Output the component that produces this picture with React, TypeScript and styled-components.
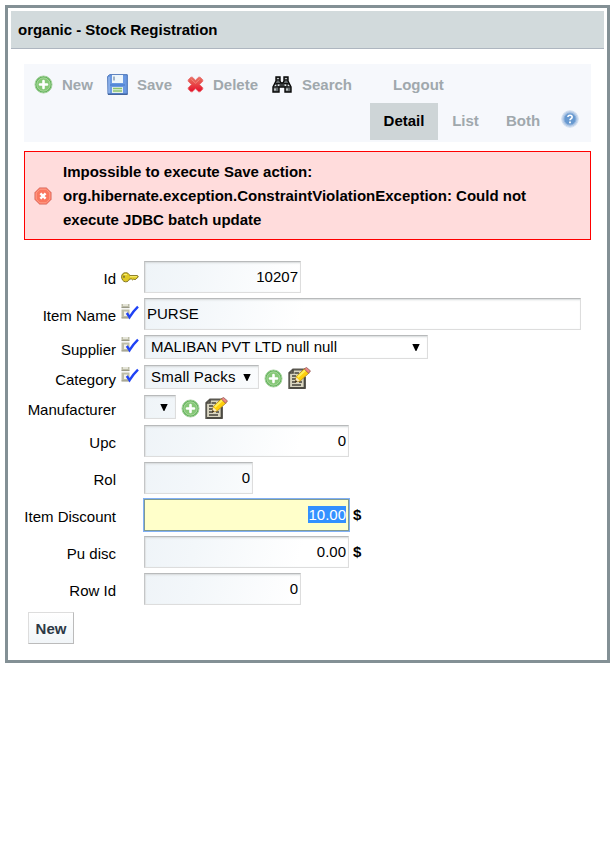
import React from "react";
import styled, { createGlobalStyle, css } from "styled-components";

const GlobalStyle = createGlobalStyle`
  * { box-sizing: border-box; }
  body { margin: 0; background: #fff; color: #000; font: 15px/24px "Liberation Sans", Arial, sans-serif; }
  svg { display: block; flex: none; }
`;

const Frame = styled.main`
  width: 605px;
  height: 658px;
  margin: 5px;
  padding: 3px;
  border: 3px solid #839095;
`;
const TitleBar = styled.h1`
  margin: 0;
  height: 38px;
  padding-left: 7px;
  border-bottom: 1px solid #aeb6c0;
  background: #d2dadc;
  font-size: 15px;
  line-height: 37px;
  letter-spacing: -0.02px;
`;
const Toolbar = styled.nav`
  width: 567px;
  height: 78px;
  margin: 15px 0 0 13px;
  background: #f6f8fc;
`;
const ActionRow = styled.div`
  display: flex;
  align-items: center;
  height: 39px;
  padding: 2px 0 0 10px;
`;
const ActionIcon = styled.span<{ $w: number }>`
  width: ${(p) => p.$w}px;
`;
const Action = styled.a<{ $w: number }>`
  width: ${(p) => p.$w}px;
  color: #a0a8ad;
  font-weight: bold;
  white-space: nowrap;
`;
const ViewRow = styled.div`
  display: flex;
  justify-content: flex-end;
  padding-right: 12px;
`;
const View = styled.a<{ $active?: boolean; $w: number }>`
  width: ${(p) => p.$w}px;
  height: 37px;
  line-height: 36px;
  text-align: center;
  font-weight: bold;
  color: ${(p) => (p.$active ? "#000" : "#a0a8ad")};
  background: ${(p) => (p.$active ? "#ced5d7" : "transparent")};
`;
const HelpSlot = styled.span`
  padding: 7px 0 0 8px;
`;
const ErrorBox = styled.div`
  display: flex;
  align-items: center;
  width: 567px;
  height: 89px;
  margin: 9px 0 0 13px;
  padding-left: 9px;
  gap: 11px;
  border: 1px solid #f00;
  background: #ffdcdc;
  font-weight: bold;
`;
const ErrorLine = styled.div`
  white-space: nowrap;
`;
const Form = styled.form`
  margin: 21px 0 0 5px;
`;
const Row = styled.div<{ $compact?: boolean }>`
  display: grid;
  grid-template-columns: 100px 28px auto;
  height: ${(p) => (p.$compact ? 30 : 37)}px;
`;
const Label = styled.label<{ $drop?: number }>`
  padding-top: ${(p) => p.$drop ?? 6}px;
  text-align: right;
  white-space: nowrap;
`;
const Marker = styled.span<{ $top: number }>`
  padding: ${(p) => p.$top}px 0 0 4.5px;
`;
const Editor = styled.div`
  display: flex;
  align-items: flex-start;
`;
const fieldBox = css`
  border: 1px solid #ddd;
  border-top-color: #b8babb;
  border-left-color: #c4c6c7;
  box-shadow: inset 0 2px 2px -1px #d5d8d9, inset 1px 0 1px #e2e4e5;
  background: linear-gradient(105deg, #eff4f8 0, #f3f7fa 50px, #fff 155px);
`;
const Field = styled.div<{ $w: number; $left?: boolean; $focus?: boolean }>`
  ${fieldBox}
  width: ${(p) => p.$w}px;
  height: 32px;
  padding: 0 2px;
  line-height: 30px;
  text-align: ${(p) => (p.$left ? "left" : "right")};
  ${(p) =>
    p.$focus &&
    css`
      border-color: #7f9a91;
      background: #ffffca;
      box-shadow: 0 0 0 1px #81b0f5;
    `}
`;
const Selected = styled.span`
  display: inline-block;
  height: 17px;
  line-height: 17px;
  background: #3390ff;
  color: #fff;
`;
const Select = styled.div<{ $w: number; $spacing?: number }>`
  ${fieldBox}
  display: flex;
  justify-content: space-between;
  align-items: center;
  width: ${(p) => p.$w}px;
  height: 24px;
  padding: 0 7px 0 6px;
  line-height: 22px;
  letter-spacing: ${(p) => p.$spacing ?? 0}px;
  white-space: nowrap;
`;
const Currency = styled.b`
  padding: 4px 0 0 4px;
`;
const RowAction = styled.span<{ $x: number; $y: number }>`
  padding: ${(p) => p.$y}px 0 0 ${(p) => p.$x}px;
`;
const NewButton = styled.button`
  display: block;
  width: 46px;
  height: 32px;
  margin: 2px 0 0 12px;
  padding: 0;
  border: 1px solid #ddd;
  border-right-color: #bbb;
  border-bottom-color: #bbb;
  background: linear-gradient(#fff, #f1f5f8);
  color: #2c3845;
  font: bold 15px "Liberation Sans", Arial, sans-serif;
`;

const AddIcon = () => (
  <svg width="19" height="19" viewBox="0 0 19 19">
    <circle cx="9.5" cy="9.5" r="8.5" fill="#5fb158" stroke="#a4d19b" />
    <circle cx="9.5" cy="9.5" r="6.7" fill="#86c877" stroke="#b5dcaa" strokeWidth=".8" />
    <path d="M9.5 6v7M6 9.5h7" stroke="#fff" strokeWidth="2.6" strokeLinecap="round" />
  </svg>
);
const SaveIcon = () => (
  <svg width="21" height="21" viewBox="0 0 21 21">
    <path d="M2.5.7h17.8v19.6H1L.7 2.5z" fill="#6b99e2" stroke="#4670b4" />
    <path d="M2 3v16.5" stroke="#a7c5f2" />
    <path d="M5 1h11v8H5z" fill="#eef6fb" />
    <path d="M7 2.5v4" stroke="#7890ab" strokeWidth="1.3" />
    <path d="M3 10h15v2H3z" fill="#5588d6" />
    <path d="M5 13h11v6H5z" fill="#e4f0e7" />
    <path d="M6 14.5h9M6 17h9" stroke="#8cc36d" strokeWidth="1.5" />
    <path d="M1 20.2h19.5" stroke="#36588f" />
  </svg>
);
const DeleteIcon = () => (
  <svg width="17" height="17" viewBox="0 0 17 17">
    <defs>
      <linearGradient id="red" x2="0" y2="1">
        <stop stopColor="#e8705f" />
        <stop offset=".45" stopColor="#e84a49" />
        <stop offset="1" stopColor="#e60d2b" />
      </linearGradient>
    </defs>
    <path d="M3.9 1.2h1.4l3.2 3 3.2-3h1.4l2.7 2.7v1.3l-3.2 3.3 3.2 3.3v1.3l-2.7 2.7h-1.4l-3.2-3-3.2 3H3.9l-2.7-2.7v-1.3l3.2-3.3-3.2-3.3V3.9z" fill="url(#red)" stroke="#e8696c" strokeWidth=".9" strokeLinejoin="round" />
    <path d="m4.3 3.2 4.2 4 4.2-4" fill="none" stroke="#f39b8f" opacity=".7" />
  </svg>
);
const SearchIcon = () => (
  <svg width="20" height="17" viewBox="0 0 20 17">
    <path d="M4 1h4v4l1 2h2l1-2V1h4v4l3 6v5h-6v-5H7v5H1v-5l3-6z" fill="#63696b" stroke="#080808" strokeWidth="1.4" />
    <path d="M4 4h4m4 0h4M3.5 7.5H8m4 0h4.5M1 11h6m6 0h6M5 8v3m10-3v3M9 6v4m2-4v4" stroke="#111" />
    <path d="M6 2v1M14 2v1M6.5 8.5V10M13.5 8.5V10M3.5 9v1M16.5 9v1M3 12.5v2m12-2v2" stroke="#e5e8e9" strokeWidth="1.4" />
  </svg>
);
const HelpIcon = () => (
  <svg width="18" height="18" viewBox="0 0 18 18">
    <circle cx="9" cy="9" r="8.3" fill="#b8cde8" stroke="#d3e0f0" />
    <circle cx="9" cy="9" r="6" fill="#6799d0" stroke="#8aafda" />
    <path d="M6.8 7Q7 5.3 9 5.3t2.2 1.5Q11.3 8 10 8.8q-1 .5-1 1.4" fill="none" stroke="#fff" strokeWidth="1.6" />
    <path d="M9 11.5v1.7" stroke="#fff" strokeWidth="1.8" />
  </svg>
);
const ErrorIcon = () => (
  <svg width="18" height="18" viewBox="0 0 18 18">
    <path d="M5.5.7h7l4.8 4.8v7l-4.8 4.8h-7L.7 12.5v-7z" fill="#f36550" stroke="#e39a94" />
    <path d="M6 2.2h6L15.8 6v6L12 15.8H6L2.2 12V6z" fill="#fa775f" stroke="#ffa18b" />
    <path d="m6.4 6.4 5.2 5.2m0-5.2-5.2 5.2" stroke="#fff" strokeWidth="2.4" />
  </svg>
);
const KeyIcon = () => (
  <svg width="18" height="11" viewBox="0 0 18 11">
    <path d="M4.5.7C2.2.7.6 2.3.6 4.8s1.6 5 3.9 5c2.2 0 3.4-1 4-2.8h2l1 .9 1.3-.9 1 1 1-1 2.5-2-.8-1.4H8.8C8 1.7 6.8.7 4.5.7z" fill="#dfc925" stroke="#857823" />
    <path d="M3 2.6h3M9 4.7h7" stroke="#fff47a" />
    <path d="M3 3.8v2" stroke="#6d6838" strokeWidth="1.5" />
  </svg>
);
const RequiredIcon = () => (
  <svg width="18" height="16" viewBox="0 0 18 16">
    <path d="M.5 0h8v3.5h-8zM.5 5.5h8V14h-8z" fill="#bdbda8" />
    <path d="M2 .3h5v1.4H2zM3 7.5h3.5V12H3z" fill="#f2f2e9" />
    <path d="M.5 3.6h8M.5 14h8" stroke="#939380" />
    <path d="m5.8 9 2.8 4.2Q12 7.5 17 2.7" fill="none" stroke="#1f42f5" strokeWidth="2.4" />
  </svg>
);
const EditIcon = () => (
  <svg width="23" height="22" viewBox="0 0 23 22">
    <path d="M5 2.5h11.5V21H1.2V6z" fill="#d9d5c0" stroke="#5a5850" strokeWidth="1.8" />
    <path d="M5 2.5V6H1.2M2 21h15V10" fill="none" stroke="#494740" strokeWidth="1.6" />
    <path d="M6.5 6H11M4 9h4M4 12h4M4 15h4m3 0h3M4 18h9" stroke="#45433b" strokeWidth="1.4" />
    <path d="m7.3 15 1-5.5L16.5 1.6 21.3 5.8 12.2 14z" fill="#ffcf0c" stroke="#a4791c" strokeWidth=".7" />
    <path d="m9.8 10 8.2-7.5" stroke="#fff05a" strokeWidth="2" />
    <path d="m16.3 2 2.1-1.6 4.1 3.5-2 2.3z" fill="#ef8885" stroke="#8e5550" strokeWidth=".8" />
    <path d="m7.3 15 1-4.8 3.5 3.5z" fill="#f7e7bd" />
    <path d="m6.8 15.5.9-2.5 1.7 1.6z" fill="#2b2118" />
  </svg>
);
const Arrow = () => (
  <svg width="8" height="7" viewBox="0 0 8 7">
    <path d="M.3 0h7.4L4.4 7h-.8z" fill="#000" />
  </svg>
);

export default function App() {
  return (
    <>
      <GlobalStyle />
      <Frame>
        <TitleBar>organic - Stock Registration</TitleBar>
        <Toolbar>
          <ActionRow>
            <ActionIcon $w={28}><AddIcon /></ActionIcon>
            <Action $w={44.5}>New</Action>
            <ActionIcon $w={30.5}><SaveIcon /></ActionIcon>
            <Action $w={49.5}>Save</Action>
            <ActionIcon $w={26.5}><DeleteIcon /></ActionIcon>
            <Action $w={59}>Delete</Action>
            <ActionIcon $w={30}><SearchIcon /></ActionIcon>
            <Action $w={91}>Search</Action>
            <Action $w={60}>Logout</Action>
          </ActionRow>
          <ViewRow>
            <View $w={68} $active>Detail</View>
            <View $w={55}>List</View>
            <View $w={60}>Both</View>
            <HelpSlot><HelpIcon /></HelpSlot>
          </ViewRow>
        </Toolbar>
        <ErrorBox role="alert">
          <ErrorIcon />
          <div>
            <ErrorLine>Impossible to execute Save action:</ErrorLine>
            <ErrorLine>org.hibernate.exception.ConstraintViolationException: Could not</ErrorLine>
            <ErrorLine>execute JDBC batch update</ErrorLine>
          </div>
        </ErrorBox>
        <Form>
          <Row>
            <Label>Id</Label>
            <Marker $top={11}><KeyIcon /></Marker>
            <Editor><Field $w={157}>10207</Field></Editor>
          </Row>
          <Row>
            <Label>Item Name</Label>
            <Marker $top={6}><RequiredIcon /></Marker>
            <Editor><Field $w={437} $left>PURSE</Field></Editor>
          </Row>
          <Row $compact>
            <Label $drop={3}>Supplier</Label>
            <Marker $top={2}><RequiredIcon /></Marker>
            <Editor><Select $w={284} $spacing={0.03}>MALIBAN PVT LTD null null<Arrow /></Select></Editor>
          </Row>
          <Row $compact>
            <Label $drop={3}>Category</Label>
            <Marker $top={2}><RequiredIcon /></Marker>
            <Editor>
              <Select $w={115} $spacing={0.2}>Small Packs<Arrow /></Select>
              <RowAction $x={4.5} $y={3.5}><AddIcon /></RowAction>
              <RowAction $x={5.5} $y={2}><EditIcon /></RowAction>
            </Editor>
          </Row>
          <Row $compact>
            <Label $drop={3}>Manufacturer</Label>
            <Marker $top={0} />
            <Editor>
              <Select $w={32}><span /><Arrow /></Select>
              <RowAction $x={4.5} $y={3.5}><AddIcon /></RowAction>
              <RowAction $x={5.5} $y={2}><EditIcon /></RowAction>
            </Editor>
          </Row>
          <Row><Label>Upc</Label><Marker $top={0} /><Editor><Field $w={205}>0</Field></Editor></Row>
          <Row><Label>Rol</Label><Marker $top={0} /><Editor><Field $w={109}>0</Field></Editor></Row>
          <Row>
            <Label>Item Discount</Label>
            <Marker $top={0} />
            <Editor><Field $w={205} $focus><Selected>10.00</Selected></Field><Currency>$</Currency></Editor>
          </Row>
          <Row>
            <Label>Pu disc</Label>
            <Marker $top={0} />
            <Editor><Field $w={205}>0.00</Field><Currency>$</Currency></Editor>
          </Row>
          <Row><Label>Row Id</Label><Marker $top={0} /><Editor><Field $w={157}>0</Field></Editor></Row>
          <NewButton type="button">New</NewButton>
        </Form>
      </Frame>
    </>
  );
}
